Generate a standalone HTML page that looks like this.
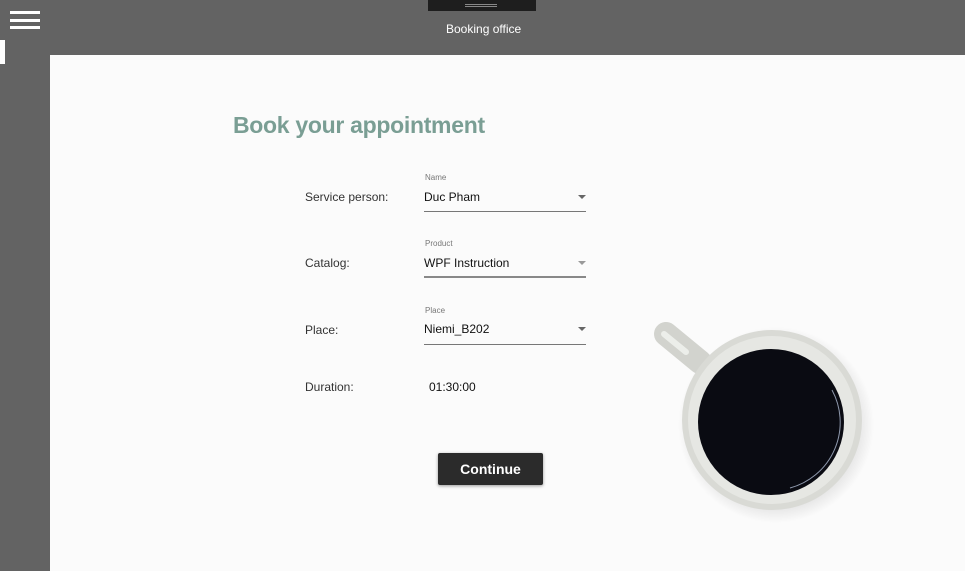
<!DOCTYPE html>
<html><head><meta charset="utf-8"><style>
body{margin:0;width:965px;height:571px;background:#636363;position:relative;overflow:hidden;font-family:"Liberation Sans",sans-serif}
.a{position:absolute}
.lbl{font-size:12px;color:#333}
.hint{font-size:8px;color:#777}
.val{font-size:12px;color:#111}
.line{height:1px;background:#777;width:162px}
.tri{width:0;height:0;border-left:4px solid transparent;border-right:4px solid transparent;border-top:4px solid #666}
</style></head><body>
<div class="a" style="left:10px;top:11px;width:30px;height:3px;background:#fff"></div>
<div class="a" style="left:10px;top:19px;width:30px;height:3px;background:#fff"></div>
<div class="a" style="left:10px;top:26px;width:30px;height:3px;background:#fff"></div>
<div class="a" style="left:0;top:40px;width:5px;height:24px;background:#fff"></div>
<div class="a" style="left:428px;top:0;width:108px;height:11px;background:#1e1e1e"></div>
<div class="a" style="left:465px;top:4px;width:32px;height:1px;background:#888"></div>
<div class="a" style="left:465px;top:6px;width:32px;height:1px;background:#888"></div>
<div class="a" style="left:446px;top:22px;font-size:12px;color:#fff">Booking office</div>
<div class="a" style="left:50px;top:55px;width:915px;height:516px;background:#fbfbfb"></div>
<div class="a" style="left:233px;top:112px;font-size:23px;color:#7a9e94;font-weight:bold;letter-spacing:-0.3px">Book your appointment</div>

<div class="a lbl" style="left:305px;top:190px">Service person:</div>
<div class="a hint" style="left:425px;top:173px">Name</div>
<div class="a val" style="left:424px;top:190px">Duc Pham</div>
<div class="a tri" style="left:578px;top:195px"></div>
<div class="a line" style="left:424px;top:211px"></div>

<div class="a lbl" style="left:305px;top:256px">Catalog:</div>
<div class="a hint" style="left:425px;top:239px">Product</div>
<div class="a val" style="left:424px;top:256px">WPF Instruction</div>
<div class="a tri" style="left:578px;top:261px;border-top-color:#999"></div>
<div class="a line" style="left:424px;top:276px;height:2px;background:#888"></div>

<div class="a lbl" style="left:305px;top:323px">Place:</div>
<div class="a hint" style="left:425px;top:306px">Place</div>
<div class="a val" style="left:424px;top:322px">Niemi_B202</div>
<div class="a tri" style="left:578px;top:327px"></div>
<div class="a line" style="left:424px;top:344px"></div>

<div class="a lbl" style="left:305px;top:380px">Duration:</div>
<div class="a val" style="left:429px;top:380px">01:30:00</div>

<div class="a" style="left:438px;top:453px;width:105px;height:32px;background:#2b2b2b;border-radius:2px;box-shadow:0 1px 3px rgba(0,0,0,.4);color:#fff;font-size:14px;font-weight:bold;text-align:center;line-height:32px">Continue</div>

<svg class="a" style="left:640px;top:300px" width="240" height="230">
<defs><radialGradient id="s" cx="0.5" cy="0.5" r="0.5"><stop offset="0.85" stop-color="#000" stop-opacity="0.08"/><stop offset="1" stop-color="#000" stop-opacity="0"/></radialGradient></defs>
<circle cx="136" cy="125" r="98" fill="url(#s)"/>
<path d="M26 34 L60 62" stroke="#d2d3ce" stroke-width="24" stroke-linecap="round"/>
<path d="M24 34 L46 52" stroke="#eceeea" stroke-width="6" stroke-linecap="round"/>
<circle cx="132" cy="120" r="90" fill="#d9dad5"/>
<circle cx="132" cy="120" r="84" fill="#e6e7e3"/>
<circle cx="131" cy="122" r="73" fill="#0a0b12"/>
<path d="M192 90 A68 68 0 0 1 150 188" stroke="#8e98ac" stroke-width="1" fill="none"/>
</svg>
</body></html>
